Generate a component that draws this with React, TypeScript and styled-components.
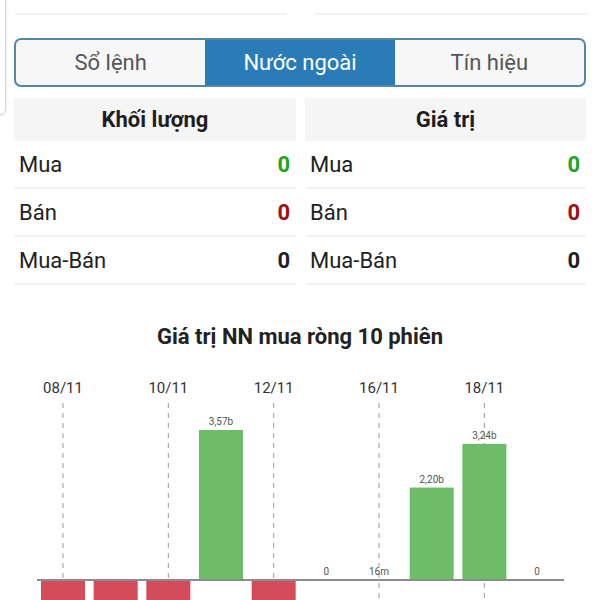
import React from "react";
import styled, { createGlobalStyle } from "styled-components";

/*--------------------------------------------------------------*/

const GlobalStyle = createGlobalStyle`
  * {
    box-sizing: border-box;
  }
  body {
    margin: 0;
    background: #ffffff;
    font-family: Roboto, "Noto Sans", Arial, sans-serif;
  }
`;

interface Row {
  label: string;
  value: string;
  tone: "up" | "down" | "flat";
}

interface Bar {
  date?: string;
  value: number;
  label?: string;
}

const ROWS: Row[] = [
  { label: "Mua", value: "0", tone: "up" },
  { label: "Bán", value: "0", tone: "down" },
  { label: "Mua-Bán", value: "0", tone: "flat" },
];

const TABS = ["Sổ lệnh", "Nước ngoài", "Tín hiệu"];

// Chart data, values in billions
const BARS: Bar[] = [
  { date: "08/11", value: -1 },
  { value: -1 },
  { date: "10/11", value: -1 },
  { value: 3.57, label: "3,57b" },
  { date: "12/11", value: -1 },
  { value: 0, label: "0" },
  { date: "16/11", value: 0.016, label: "16m" },
  { value: 2.2, label: "2,20b" },
  { date: "18/11", value: 3.24, label: "3,24b" },
  { value: 0, label: "0" },
];

/*--------------------------------------------------------------*/

const Chart: React.FC = () => {
  const baseY = 230;
  const scale = 150 / 3.57;
  const step = 52.67;
  const first = 63;
  const barW = 44;

  return (
    <ChartSvg width={600} height={251} viewBox="0 0 600 251">
      {BARS.map((b, i) => {
        const cx = first + step * i;
        return (
          b.date && (
            <g key={"d" + i}>
              <text x={cx} y={43} textAnchor="middle" fontSize={15} fill="#333">
                {b.date}
              </text>
              <line
                x1={cx}
                x2={cx}
                y1={53}
                y2={251}
                stroke="#9a9a9a"
                strokeWidth={1}
                strokeDasharray="5 5"
              />
            </g>
          )
        );
      })}
      {BARS.map((b, i) => {
        const cx = first + step * i;
        if (b.value < 0) {
          return (
            <rect key={"b" + i} x={cx - barW / 2} y={baseY} width={barW} height={30} fill="#d44b5b" />
          );
        }
        const h = b.value > 0.1 ? b.value * scale : 0;
        return (
          <g key={"b" + i}>
            {h > 0 && <rect x={cx - barW / 2} y={baseY - h} width={barW} height={h} fill="#6dbd68" />}
            {b.label && (
              <text x={cx} y={baseY - h - 5} textAnchor="middle" fontSize={10} fill="#555">
                {b.label}
              </text>
            )}
          </g>
        );
      })}
      <line x1={37} x2={564} y1={baseY} y2={baseY} stroke="#8c8c8c" strokeWidth={2} />
    </ChartSvg>
  );
};

/*--------------------------------------------------------------*/

export default function App() {
  return (
    <Page>
      <GlobalStyle />
      <EdgeCard />

      <TopStub>
        <StubCell />
        <StubCell />
      </TopStub>

      <Tabs>
        {TABS.map((t, i) => (
          <Tab key={t} $active={i === 1}>
            {t}
          </Tab>
        ))}
      </Tabs>

      <Tables>
        {["Khối lượng", "Giá trị"].map((h) => (
          <Table key={h}>
            <TableHead>{h}</TableHead>
            {ROWS.map((r) => (
              <TableRow key={r.label}>
                <RowLabel>{r.label}</RowLabel>
                <RowValue $tone={r.tone}>{r.value}</RowValue>
              </TableRow>
            ))}
          </Table>
        ))}
      </Tables>

      <ChartTitle>Giá trị NN mua ròng 10 phiên</ChartTitle>
      <Chart />
    </Page>
  );
}

/*--------------------------------------------------------------*/

const Page = styled.div`
  position: relative;
  width: 600px;
  height: 600px;
  overflow: hidden;
  background: #ffffff;
`;

// Faint edge of a card peeking in from the left
const EdgeCard = styled.div`
  position: absolute;
  left: -12px;
  top: -12px;
  width: 18px;
  height: 127px;
  border: 1px solid #d6d6d6;
  border-radius: 6px;
  box-shadow: 0 1px 3px rgba(0, 0, 0, 0.12);
  background: transparent;
`;

const TopStub = styled.div`
  display: grid;
  grid-template-columns: 272px 272px;
  justify-content: space-between;
  padding: 0 13px 0 15px;
  height: 15px;
`;

const StubCell = styled.div`
  border-bottom: 2px solid #f3f3f3;
`;

const Tabs = styled.div`
  display: grid;
  grid-template-columns: repeat(3, 1fr);
  margin: 23px 14px 0 14px;
  height: 49px;
  border: 2px solid #5287a6;
  border-radius: 7px;
  overflow: hidden;
  background: #f7f7f7;
`;

const Tab = styled.div<{ $active: boolean }>`
  display: flex;
  align-items: center;
  justify-content: center;
  font-size: 22px;
  color: ${({ $active }) => ($active ? "#ffffff" : "#555555")};
  background: ${({ $active }) => ($active ? "#2a7cb8" : "transparent")};
`;

const Tables = styled.div`
  display: grid;
  grid-template-columns: 282px 281px;
  justify-content: space-between;
  padding: 0 14px 0 14px;
  margin-top: 11px;
`;

const Table = styled.div`
  display: flex;
  flex-direction: column;
`;

const TableHead = styled.div`
  height: 43px;
  display: flex;
  align-items: center;
  justify-content: center;
  background: #f5f5f5;
  font-size: 22px;
  font-weight: 700;
  color: #1e1e1e;
`;

const TableRow = styled.div`
  height: 48px;
  display: flex;
  align-items: center;
  justify-content: space-between;
  padding: 0 6px 0 5px;
  border-bottom: 2px solid #f2f2f2;
`;

const RowLabel = styled.span`
  font-size: 22px;
  color: #222222;
`;

const RowValue = styled.span<{ $tone: "up" | "down" | "flat" }>`
  font-size: 22px;
  font-weight: 700;
  color: ${({ $tone }) =>
    $tone === "up" ? "#1ea51e" : $tone === "down" ? "#a40d0d" : "#1e1e1e"};
`;

const ChartTitle = styled.div`
  padding-top: 39px;
  line-height: 26px;
  text-align: center;
  font-size: 22px;
  font-weight: 700;
  color: #222222;
`;

const ChartSvg = styled.svg`
  display: block;
  font-family: Roboto, "Noto Sans", Arial, sans-serif;
`;
